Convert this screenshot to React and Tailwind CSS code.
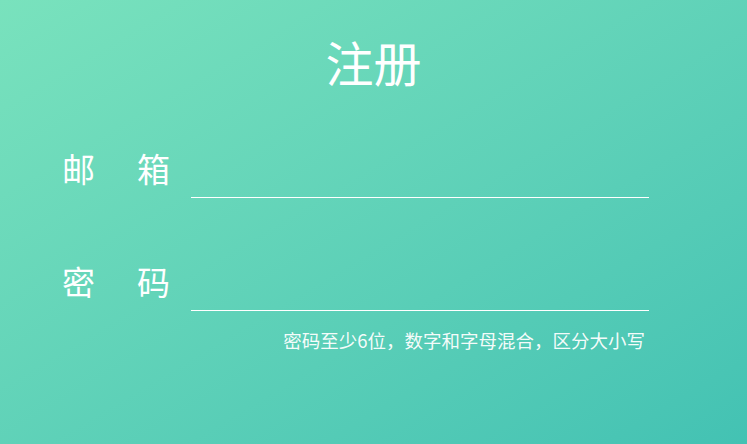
export default function App() {
  return (
    <div
      className="w-[747px] h-[444px] bg-gradient-to-br from-[#79e2bd] to-[#43c2b3] text-white flex flex-col"
      style={{ fontFamily: '"Noto Sans CJK SC", "Noto Sans", sans-serif' }}
    >
      <h1 className="text-center text-[48px] leading-none mt-[37px]">注册</h1>

      <form className="flex flex-col mt-[63px] pl-[62px] w-[649px]">
        <div className="flex items-end">
          <label className="w-[108px] flex justify-between text-[33px] leading-none pb-[13px]">
            <span>邮</span>
            <span>箱</span>
          </label>
          <input
            type="text"
            className="ml-[21px] flex-1 h-[50px] bg-transparent border-b border-white outline-none text-[20px]"
          />
        </div>

        <div className="flex items-end mt-[63px]">
          <label className="w-[108px] flex justify-between text-[33px] leading-none pb-[13px]">
            <span>密</span>
            <span>码</span>
          </label>
          <input
            type="password"
            className="ml-[21px] flex-1 h-[50px] bg-transparent border-b border-white outline-none text-[20px]"
          />
        </div>

        <p className="text-right text-[18.5px] leading-none mt-[20px] pr-[4px] text-white/95">
          密码至少6位，数字和字母混合，区分大小写
        </p>
      </form>
    </div>
  );
}
